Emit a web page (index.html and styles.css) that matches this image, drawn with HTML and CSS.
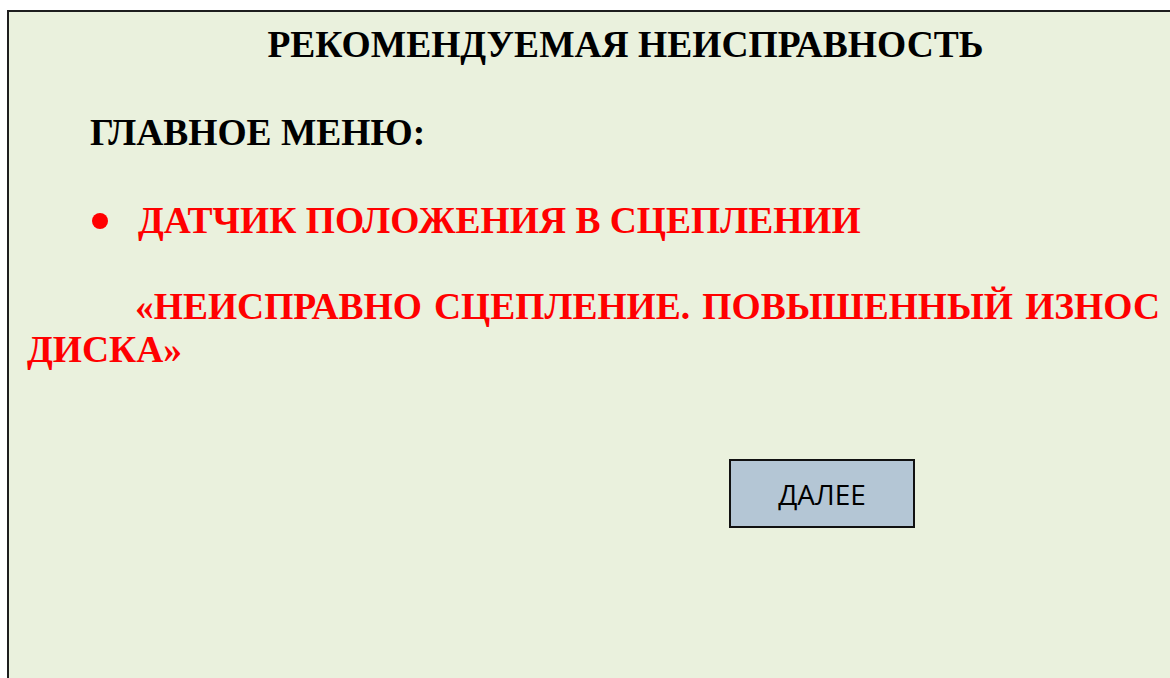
FILE: index.html
```html
<!DOCTYPE html>
<html lang="ru">
<head>
<meta charset="utf-8">
<title>Рекомендуемая неисправность</title>
<link rel="stylesheet" href="styles.css">
</head>
<body>
<div class="sheet">
  <h1 class="title">РЕКОМЕНДУЕМАЯ НЕИСПРАВНОСТЬ</h1>
  <p class="menu">ГЛАВНОЕ МЕНЮ:</p>
  <ul class="faults">
    <li class="fault"><span class="dot" aria-hidden="true"></span><span>ДАТЧИК ПОЛОЖЕНИЯ В СЦЕПЛЕНИИ</span></li>
  </ul>
  <p class="message">«НЕИСПРАВНО СЦЕПЛЕНИЕ. ПОВЫШЕННЫЙ ИЗНОС ДИСКА»</p>
  <div class="actions">
    <button class="next" type="button">ДАЛЕЕ</button>
  </div>
</div>
</body>
</html>
```
FILE: styles.css
```css
html, body {
  margin: 0;
  padding: 0;
  background: #ffffff;
  overflow: hidden;
  height: 100%;
}

.sheet {
  box-sizing: border-box;
  margin: 10px 0 0 7px;
  width: 1180px;
  height: 700px;
  border-top: 2px solid #1e1e1e;
  border-left: 2px solid #1e1e1e;
  background: #eaf1dd;
  padding: 11px 0 0 18px;
  font-family: "Liberation Serif", "Times New Roman", serif;
  font-weight: bold;
  font-size: 37.5px;
  line-height: 43px;
  color: #000;
}

.title {
  margin: 0;
  font-size: inherit;
  text-align: center;
  width: 1197px;
}

.menu {
  margin: 45px 0 0 63px;
}

.faults {
  list-style: none;
  margin: 45px 0 0 63px;
  padding: 0;
}

.fault {
  display: flex;
  align-items: center;
  color: #ff0000;
}

.dot {
  flex: none;
  width: 16px;
  height: 16px;
  margin: 0 30px 0 2px;
  border-radius: 50%;
  background: #ff0000;
}

.message {
  margin: 43px 0 0 0;
  width: 1133px;
  color: #ff0000;
  text-align: justify;
  text-indent: 108px;
}

.actions {
  display: flex;
  margin-top: 88px;
  padding-left: 702px;
}

.next {
  box-sizing: border-box;
  width: 186px;
  height: 69px;
  border: 2px solid #111;
  background: #b4c6d5;
  font-family: "Open Sans", "Liberation Sans", sans-serif;
  font-weight: normal;
  font-size: 28px;
  color: #000;
  padding: 0;
}
```
